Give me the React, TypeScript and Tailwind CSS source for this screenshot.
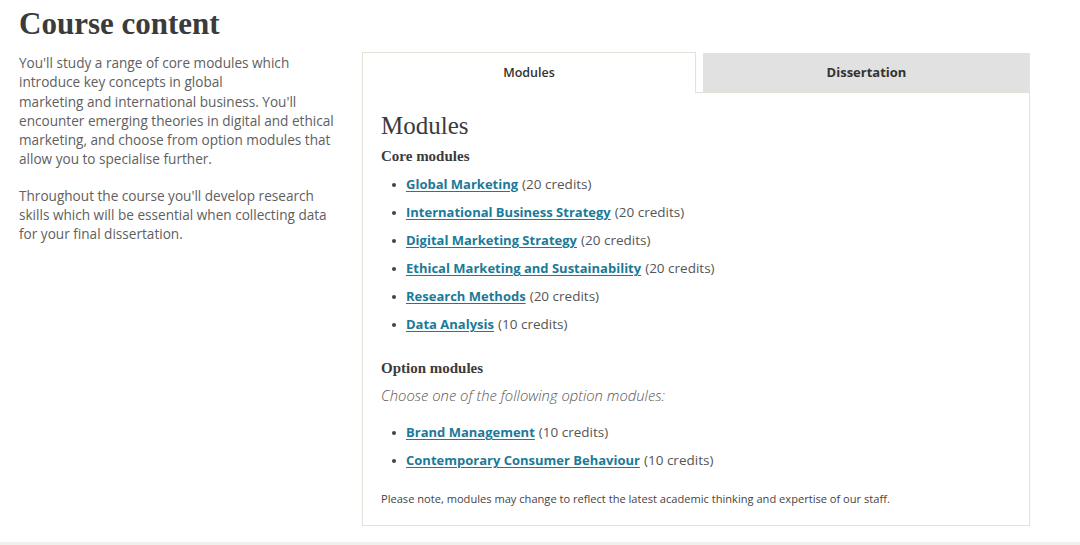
const CORE = [
  { name: "Global Marketing", credits: 20 },
  { name: "International Business Strategy", credits: 20 },
  { name: "Digital Marketing Strategy", credits: 20 },
  { name: "Ethical Marketing and Sustainability", credits: 20 },
  { name: "Research Methods", credits: 20 },
  { name: "Data Analysis", credits: 10 },
];

const OPTIONS = [
  { name: "Brand Management", credits: 10 },
  { name: "Contemporary Consumer Behaviour", credits: 10 },
];

const serif = "font-['Liberation_Serif','DejaVu_Serif',serif]";

function ModuleList({ items }: { items: { name: string; credits: number }[] }) {
  return (
    <ul className="flex flex-col gap-[9px] pl-[11px]">
      {items.map((m) => (
        <li key={m.name} className="flex items-center text-[13px] leading-[19px] text-[#555]">
          <span className="mr-[10px] h-[4px] w-[4px] rounded-full bg-[#444]" />
          <a href="#" className="font-bold text-[#1b7a98] underline decoration-[#1b7a98] underline-offset-2">
            {m.name}
          </a>
          <span className="ml-[4px] text-[13.5px]">({m.credits} credits)</span>
        </li>
      ))}
    </ul>
  );
}

export default function App() {
  return (
    <div className="flex min-h-[545px] flex-col bg-white font-['Open_Sans','Liberation_Sans',sans-serif]">
      <div className="flex-1 px-[19px] pt-[6px]">
        <h1 className={`${serif} text-[31px] font-bold leading-[36px] text-[#3b3b3b]`}>Course content</h1>

        <div className="mt-[11px] flex items-start gap-[23px]">
          <div className="w-[320px] text-[13.6px] leading-[19.3px] text-[#606060]">
            <p>
              You'll study a range of core modules which introduce key concepts in global
              <br />
              marketing and international business. You'll encounter emerging theories in digital and ethical
              marketing, and choose from option modules that allow you to specialise further.
            </p>
            <p className="mt-[17px]">
              Throughout the course you'll develop research skills which will be essential when collecting data
              for your final dissertation.
            </p>
          </div>

          <div className="-mt-[1px] w-[668px]">
            <div className="flex h-[41px] items-stretch">
              <div className="flex w-[334px] items-center justify-center border border-b-0 border-[#e2e2d8] bg-white text-[12.5px] font-semibold text-[#333]">
                Modules
              </div>
              <div className="w-[7px] border-b border-[#e2e2d8]" />
              <div className="mt-[1px] flex flex-1 items-center justify-center border border-[#e2e2d8] bg-[#e1e1e1] text-[13px] font-bold text-[#333]">
                Dissertation
              </div>
            </div>

            <div className="border-x border-b border-[#e2e2d8] px-[18px] pb-[19px] pt-[18px]">
              <h2 className={`${serif} text-[25px] leading-[30px] text-[#3b3b3b]`}>Modules</h2>
              <h3 className={`${serif} mt-[5px] text-[15px] font-bold leading-[20px] text-[#3b3b3b]`}>Core modules</h3>
              <div className="mt-[9px]">
                <ModuleList items={CORE} />
              </div>

              <h3 className={`${serif} mt-[24px] text-[15px] font-bold leading-[20px] text-[#3b3b3b]`}>Option modules</h3>
              <p className="mt-[8px] text-[14.8px] font-light italic leading-[19px] text-[#555]">
                Choose one of the following option modules:
              </p>
              <div className="mt-[18px]">
                <ModuleList items={OPTIONS} />
              </div>

              <p className="mt-[22px] text-[11.1px] leading-[14px] text-[#444]">
                Please note, modules may change to reflect the latest academic thinking and expertise of our staff.
              </p>
            </div>
          </div>
        </div>
      </div>
      <div className="h-[3px] bg-[#f1f1ec]" />
    </div>
  );
}
